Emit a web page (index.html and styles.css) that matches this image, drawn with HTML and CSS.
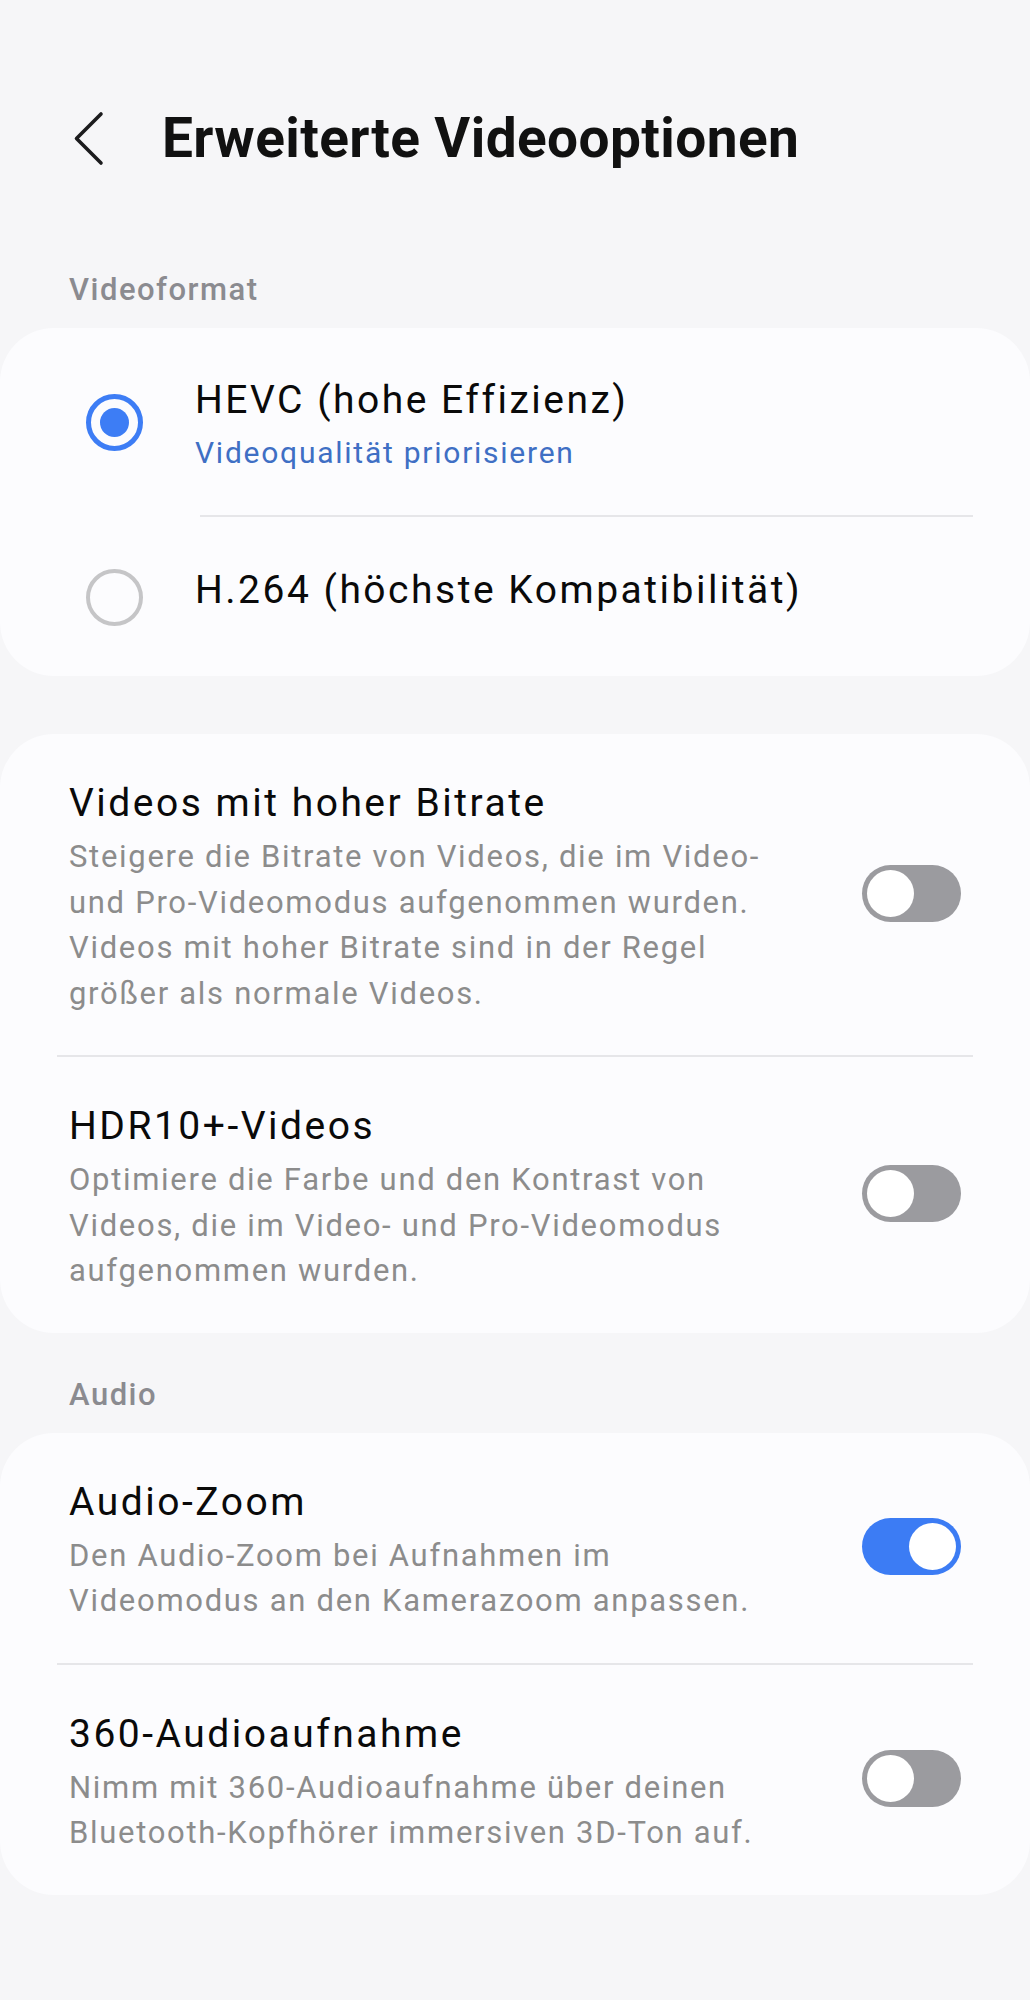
FILE: index.html
```html
<!DOCTYPE html>
<html lang="de">
<head>
<meta charset="utf-8">
<title>Erweiterte Videooptionen</title>
<link rel="stylesheet" href="styles.css">
</head>
<body>
<div class="page">
  <header class="topbar">
    <span class="back" aria-label="Zurück">
      <svg width="44" height="60" viewBox="0 0 44 60" fill="none" stroke="#1c1c1e" stroke-width="3.6" stroke-linecap="round" stroke-linejoin="round"><path d="M35 6 L10.5 30.5 L35 55"/></svg>
    </span>
    <h1 class="page-title">Erweiterte Videooptionen</h1>
  </header>

  <div class="section-label">Videoformat</div>
  <section class="card">
    <div class="radio-row first">
      <span class="radio on"><span class="dot"></span></span>
      <div class="radio-text">
        <div class="row-title">HEVC (hohe Effizienz)</div>
        <div class="row-sub">Videoqualität priorisieren</div>
      </div>
    </div>
    <div class="divider radio-divider"></div>
    <div class="radio-row second">
      <span class="radio"></span>
      <div class="radio-text single">
        <div class="row-title">H.264 (höchste Kompatibilität)</div>
      </div>
    </div>
  </section>

  <section class="card card-gap">
    <div class="switch-row">
      <div class="switch-text">
        <div class="row-title">Videos mit hoher Bitrate</div>
        <div class="row-desc">Steigere die Bitrate von Videos, die im Video-<br>und Pro-Videomodus aufgenommen wurden.<br>Videos mit hoher Bitrate sind in der Regel<br>größer als normale Videos.</div>
      </div>
      <span class="toggle"><span class="knob"></span></span>
    </div>
    <div class="divider"></div>
    <div class="switch-row">
      <div class="switch-text">
        <div class="row-title">HDR10+-Videos</div>
        <div class="row-desc">Optimiere die Farbe und den Kontrast von<br>Videos, die im Video- und Pro-Videomodus<br>aufgenommen wurden.</div>
      </div>
      <span class="toggle"><span class="knob"></span></span>
    </div>
  </section>

  <div class="section-label audio-label">Audio</div>
  <section class="card">
    <div class="switch-row">
      <div class="switch-text">
        <div class="row-title">Audio-Zoom</div>
        <div class="row-desc">Den Audio-Zoom bei Aufnahmen im<br>Videomodus an den Kamerazoom anpassen.</div>
      </div>
      <span class="toggle on"><span class="knob"></span></span>
    </div>
    <div class="divider"></div>
    <div class="switch-row">
      <div class="switch-text">
        <div class="row-title">360-Audioaufnahme</div>
        <div class="row-desc">Nimm mit 360-Audioaufnahme über deinen<br>Bluetooth-Kopfhörer immersiven 3D-Ton auf.</div>
      </div>
      <span class="toggle"><span class="knob"></span></span>
    </div>
  </section>
</div>
</body>
</html>
```

FILE: styles.css
```css
* { box-sizing: border-box; }

html, body {
  margin: 0;
  padding: 0;
  background: #f6f6f8;
}

body {
  font-family: Roboto, "Noto Sans", "Liberation Sans", sans-serif;
  color: #111;
  width: 1030px;
  min-height: 2000px;
}

.page {
  display: flex;
  flex-direction: column;
}

.topbar {
  margin-top: 100px;
  height: 76px;
  display: flex;
  align-items: center;
  padding-left: 66px;
}

.back {
  display: flex;
  width: 44px;
  height: 60px;
}

.page-title {
  margin: 0 0 0 52px;
  font-size: 55px;
  font-weight: 700;
  letter-spacing: 0.4px;
  line-height: 76px;
  color: #111;
}

.section-label {
  margin-top: 94px;
  padding-left: 69px;
  font-size: 31px;
  font-weight: 500;
  letter-spacing: 1.5px;
  line-height: 40px;
  color: #8b8b90;
}

.audio-label {
  margin-top: 42px;
}

.card {
  margin-top: 18px;
  background: #fcfcfe;
  border-radius: 54px;
  display: flex;
  flex-direction: column;
}

.card-gap {
  margin-top: 58px;
}

.radio-row {
  display: flex;
  align-items: center;
  padding-left: 86px;
}

.radio-row.first {
  padding-top: 49px;
  padding-bottom: 42px;
}

.radio-row.first .radio {
  margin-bottom: 6px;
}

.radio-row.second {
  padding-top: 50px;
  padding-bottom: 49px;
}

.radio {
  flex: none;
  width: 57px;
  height: 57px;
  border-radius: 50%;
  border: 4.5px solid #c5c5c7;
  display: flex;
  align-items: center;
  justify-content: center;
}

.radio.on {
  border: 5px solid #3d7df5;
}

.radio .dot {
  width: 29px;
  height: 29px;
  border-radius: 50%;
  background: #3d7df5;
}

.radio-text {
  margin-left: 52px;
  display: flex;
  flex-direction: column;
}

.radio-text.single {
  padding-bottom: 14px;
}

.row-title {
  font-size: 39px;
  line-height: 46px;
  letter-spacing: 2.5px;
  color: #0a0a0a;
  white-space: nowrap;
}

.row-sub {
  margin-top: 10px;
  font-size: 30px;
  line-height: 40px;
  letter-spacing: 1.75px;
  color: #3f6fc4;
}

.divider {
  height: 2px;
  background: #e6e6e9;
  margin: 0 57px;
}

.radio-divider {
  margin-left: 200px;
}

.switch-row {
  display: flex;
  align-items: center;
  justify-content: space-between;
  padding: 46px 69px 39px 69px;
}

.switch-text {
  display: flex;
  flex-direction: column;
}

.row-desc {
  margin-top: 8px;
  font-size: 31px;
  line-height: 45.5px;
  letter-spacing: 1.7px;
  color: #8c8c8c;
  white-space: nowrap;
}

.toggle {
  flex: none;
  width: 99px;
  height: 57px;
  margin-bottom: 9px;
  border-radius: 29px;
  background: #9b9b9f;
  padding: 5px;
  display: flex;
  justify-content: flex-start;
}

.toggle.on {
  background: #3c7cf4;
  justify-content: flex-end;
}

.knob {
  width: 47px;
  height: 47px;
  border-radius: 50%;
  background: #ffffff;
}
```
